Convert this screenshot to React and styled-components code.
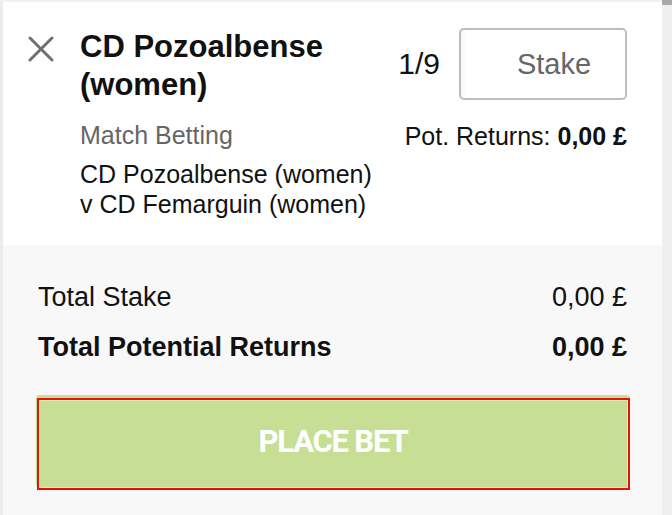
import styled, { createGlobalStyle } from "styled-components";

const GlobalStyle = createGlobalStyle`
  html, body {
    margin: 0;
    padding: 0;
    background: #f8f8f8;
  }
  body {
    font-family: "Liberation Sans", Arial, sans-serif;
    color: #111;
  }
`;

const App = () => {
  return (
    <>
      <GlobalStyle />
      <Page>
        <Panel>
          <Selection>
            <CloseButton aria-label="Remove selection">
              <svg width="26" height="26" viewBox="0 0 26 26">
                <path
                  d="M2 2 L24 24 M24 2 L2 24"
                  stroke="#707070"
                  strokeWidth="3"
                  strokeLinecap="round"
                  fill="none"
                />
              </svg>
            </CloseButton>
            <Details>
              <Title>CD Pozoalbense (women)</Title>
              <Market>Match Betting</Market>
              <Event>
                CD Pozoalbense (women)
                <br />v CD Femarguin (women)
              </Event>
            </Details>
            <StakeColumn>
              <StakeRow>
                <Odds>1/9</Odds>
                <StakeInput placeholder="Stake" />
              </StakeRow>
              <PotReturns>
                Pot. Returns: <strong>0,00 £</strong>
              </PotReturns>
            </StakeColumn>
          </Selection>
          <Summary>
            <SummaryRow>
              <span>Total Stake</span>
              <span>0,00 £</span>
            </SummaryRow>
            <SummaryRow $bold>
              <span>Total Potential Returns</span>
              <span>0,00 £</span>
            </SummaryRow>
            <PlaceBetButton>PLACE BET</PlaceBetButton>
          </Summary>
        </Panel>
        <Scrollbar>
          <ScrollThumb />
        </Scrollbar>
      </Page>
    </>
  );
};

const Page = styled.div`
  display: flex;
  min-height: 515px;
`;

const Panel = styled.div`
  flex: 1;
  display: flex;
  flex-direction: column;
  border-left: 3px solid #ececec;
  border-top: 2px solid #f1f1f1;
`;

const Selection = styled.section`
  display: flex;
  align-items: flex-start;
  gap: 26px;
  padding: 26px 35px 26px 25px;
  background: #fff;
`;

const CloseButton = styled.button`
  width: 26px;
  height: 26px;
  margin-top: 8px;
  padding: 0;
  border: none;
  background: none;
  display: flex;
  cursor: pointer;
`;

const Details = styled.div`
  flex: 1;
  display: flex;
  flex-direction: column;
`;

const Title = styled.h2`
  margin: 0;
  font-size: 31px;
  line-height: 38px;
  font-weight: bold;
  color: #111;
`;

const Market = styled.div`
  margin-top: 16px;
  font-size: 25px;
  line-height: 30px;
  color: #666;
`;

const Event = styled.div`
  margin-top: 9px;
  font-size: 25px;
  line-height: 30px;
  white-space: nowrap;
  color: #111;
`;

const StakeColumn = styled.div`
  display: flex;
  flex-direction: column;
  align-items: flex-end;
  gap: 21px;
`;

const StakeRow = styled.div`
  display: flex;
  align-items: center;
  gap: 19px;
`;

const Odds = styled.span`
  font-size: 30px;
  color: #111;
`;

const StakeInput = styled.input`
  box-sizing: border-box;
  width: 168px;
  height: 72px;
  padding: 0 0 0 22px;
  border: 2px solid #bdbdbd;
  border-radius: 5px;
  background: #fff;
  box-shadow: inset 6px 0 8px -6px rgba(0, 0, 0, 0.06);
  font-family: "Liberation Sans", Arial, sans-serif;
  font-size: 29px;
  text-align: center;
  color: #111;
  outline: none;

  &::placeholder {
    color: #666;
  }
`;

const PotReturns = styled.div`
  font-size: 25px;
  line-height: 30px;
  color: #111;

  strong {
    font-weight: bold;
  }
`;

const Summary = styled.section`
  flex: 1;
  display: flex;
  flex-direction: column;
  gap: 16px;
  padding: 35px 35px 24px;
  background: #f8f8f8;
`;

const SummaryRow = styled.div`
  display: flex;
  justify-content: space-between;
  font-size: 27px;
  line-height: 34px;
  font-weight: ${(p) => (p.$bold ? "bold" : "normal")};
  color: #111;
`;

const PlaceBetButton = styled.button`
  position: relative;
  margin: 15px -3px 0 -2px;
  height: 93px;
  border: none;
  border-radius: 4px;
  background: #c6df94;
  color: #fff;
  font-family: Roboto, "Liberation Sans", sans-serif;
  font-size: 31px;
  font-weight: bold;
  letter-spacing: -1.2px;
  cursor: pointer;

  &::after {
    content: "";
    position: absolute;
    top: 3px;
    left: 1px;
    right: 0;
    bottom: -2px;
    border: 2px solid #e4120c;
    box-shadow: inset 0 0 0 1px #dcedb8;
    pointer-events: none;
  }
`;

const Scrollbar = styled.div`
  width: 10px;
  background: #efefef;
`;

const ScrollThumb = styled.div`
  height: 5px;
  background: #a8a8a8;
`;

export default App;
